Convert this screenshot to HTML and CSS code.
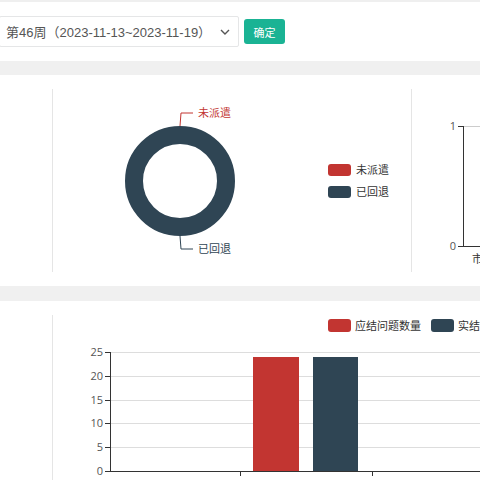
FILE: index.html
```html
<!DOCTYPE html>
<html lang="zh-CN">
<head>
    <meta charset="UTF-8">
    <meta name="viewport" content="width=device-width, initial-scale=1.0">
    <title>问题派遣统计</title>
    <link rel="stylesheet" href="styles.css">
</head>
<body>

    <!-- Week picker -->
    <div class="toolbar">
        <div class="week-select">
            <span class="week-text">第46周（2023-11-13~2023-11-19）</span>
            <svg class="chevron" width="10" height="6" viewBox="0 0 10 6"><path d="M1 1 L5 5 L9 1" fill="none" stroke="#555" stroke-width="1.4"/></svg>
        </div>
        <button type="button" class="btn-ok">确定</button>
    </div>

    <div class="band"></div>

    <!-- Dispatch status -->
    <div class="panel">
        <div class="side"></div>
        <div class="cell cell-pie">
            <svg width="358" height="183" viewBox="0 0 358 183">
                <circle cx="127" cy="92" r="46" fill="none" stroke="#2f4554" stroke-width="18"/>
                <path d="M127 37 L128 24 L140 24" fill="none" stroke="#c23531" stroke-width="1"/>
                <text x="145" y="28" class="lbl" fill="#c23531">未派遣</text>
                <path d="M127 147 L128 160 L140 160" fill="none" stroke="#2f4554" stroke-width="1"/>
                <text x="145" y="164" class="lbl" fill="#2f4554">已回退</text>

                <rect x="275" y="75" width="23" height="12" rx="3" fill="#c23531"/>
                <text x="303" y="85" class="lbl" fill="#333">未派遣</text>
                <rect x="275" y="97" width="23" height="12" rx="3" fill="#2f4554"/>
                <text x="303" y="107" class="lbl" fill="#333">已回退</text>
            </svg>
        </div>
        <div class="cell cell-axis">
            <svg width="68" height="183" viewBox="0 0 68 183">
                <line x1="51" y1="37.5" x2="68" y2="37.5" stroke="#ccc"/>
                <line x1="46" y1="37.5" x2="51" y2="37.5" stroke="#333"/>
                <line x1="51.5" y1="37" x2="51.5" y2="157" stroke="#333"/>
                <line x1="46" y1="157.5" x2="68" y2="157.5" stroke="#333"/>
                <text x="44" y="41" class="num" text-anchor="end">1</text>
                <text x="44" y="161" class="num" text-anchor="end">0</text>
                <text x="60" y="174" class="lbl" fill="#333">市</text>
            </svg>
        </div>
    </div>

    <div class="band band-low"></div>

    <!-- Closed issues -->
    <div class="panel">
        <div class="side"></div>
        <div class="cell cell-bar">
            <svg width="427" height="170" viewBox="0 0 427 170">
                <rect x="275" y="4" width="23" height="13" rx="3" fill="#c23531"/>
                <text x="302" y="15" class="lbl" fill="#333">应结问题数量</text>
                <rect x="378" y="4" width="23" height="13" rx="3" fill="#2f4554"/>
                <text x="405" y="15" class="lbl" fill="#333">实结问题数量</text>

                <g stroke="#ddd">
                    <line x1="57" y1="37.5" x2="427" y2="37.5"/>
                    <line x1="57" y1="61.5" x2="427" y2="61.5"/>
                    <line x1="57" y1="85.5" x2="427" y2="85.5"/>
                    <line x1="57" y1="108.5" x2="427" y2="108.5"/>
                    <line x1="57" y1="132.5" x2="427" y2="132.5"/>
                </g>
                <g stroke="#333">
                    <line x1="52" y1="37.5" x2="57" y2="37.5"/>
                    <line x1="52" y1="61.5" x2="57" y2="61.5"/>
                    <line x1="52" y1="85.5" x2="57" y2="85.5"/>
                    <line x1="52" y1="108.5" x2="57" y2="108.5"/>
                    <line x1="52" y1="132.5" x2="57" y2="132.5"/>
                    <line x1="52" y1="156.5" x2="427" y2="156.5"/>
                    <line x1="57.5" y1="37" x2="57.5" y2="157"/>
                    <line x1="187.5" y1="156" x2="187.5" y2="161"/>
                    <line x1="319.5" y1="156" x2="319.5" y2="161"/>
                </g>
                <g class="num" text-anchor="end">
                    <text x="50" y="41">25</text>
                    <text x="50" y="65">20</text>
                    <text x="50" y="89">15</text>
                    <text x="50" y="112">10</text>
                    <text x="50" y="136">5</text>
                    <text x="50" y="160">0</text>
                </g>

                <rect x="200" y="42" width="46" height="114" fill="#c23531"/>
                <rect x="260" y="42" width="45" height="114" fill="#2f4554"/>
            </svg>
        </div>
    </div>

</body>
</html>
```

FILE: styles.css
```css
body {
    margin: 0;
    padding: 0;
    background-color: #fff;
    font-family: "Liberation Sans", "Noto Sans CJK SC", sans-serif;
    color: #555;
    overflow: hidden;
}
.toolbar {
    display: flex;
    align-items: center;
    gap: 5px;
    height: 59px;
    border-top: 2px solid #efefef;
    background-color: #fff;
}
.week-select {
    display: flex;
    align-items: center;
    justify-content: space-between;
    box-sizing: border-box;
    width: 240px;
    height: 31px;
    margin-left: -1px;
    padding: 0 8px 0 6px;
    border: 1px solid #e5e6e7;
    border-radius: 2px;
    font-size: 13px;
    color: #555;
    white-space: nowrap;
}
.chevron {
    flex-shrink: 0;
}
.btn-ok {
    width: 41px;
    height: 25px;
    padding: 0;
    border: none;
    border-radius: 3px;
    background-color: #1ab394;
    color: #fff;
    font-family: "Noto Sans CJK SC", sans-serif;
    font-size: 11px;
}
.band {
    height: 14px;
    background-color: #f0f0f0;
}
.band-low {
    height: 15px;
}
.panel {
    display: flex;
    background-color: #fff;
}
.side {
    width: 52px;
    flex-shrink: 0;
}
.cell {
    margin: 14px 0;
    border-left: 1px solid #e5e5e5;
    flex-shrink: 0;
}
.cell svg {
    display: block;
}
.cell-pie {
    width: 358px;
}
.cell-axis {
    width: 68px;
}
.cell-bar {
    width: 427px;
    margin-bottom: 0;
}
.lbl {
    font-family: "Noto Sans CJK SC", sans-serif;
    font-size: 11px;
}
.num {
    font-family: "Open Sans", "Liberation Sans", sans-serif;
    font-size: 11px;
    fill: #555;
}
```
